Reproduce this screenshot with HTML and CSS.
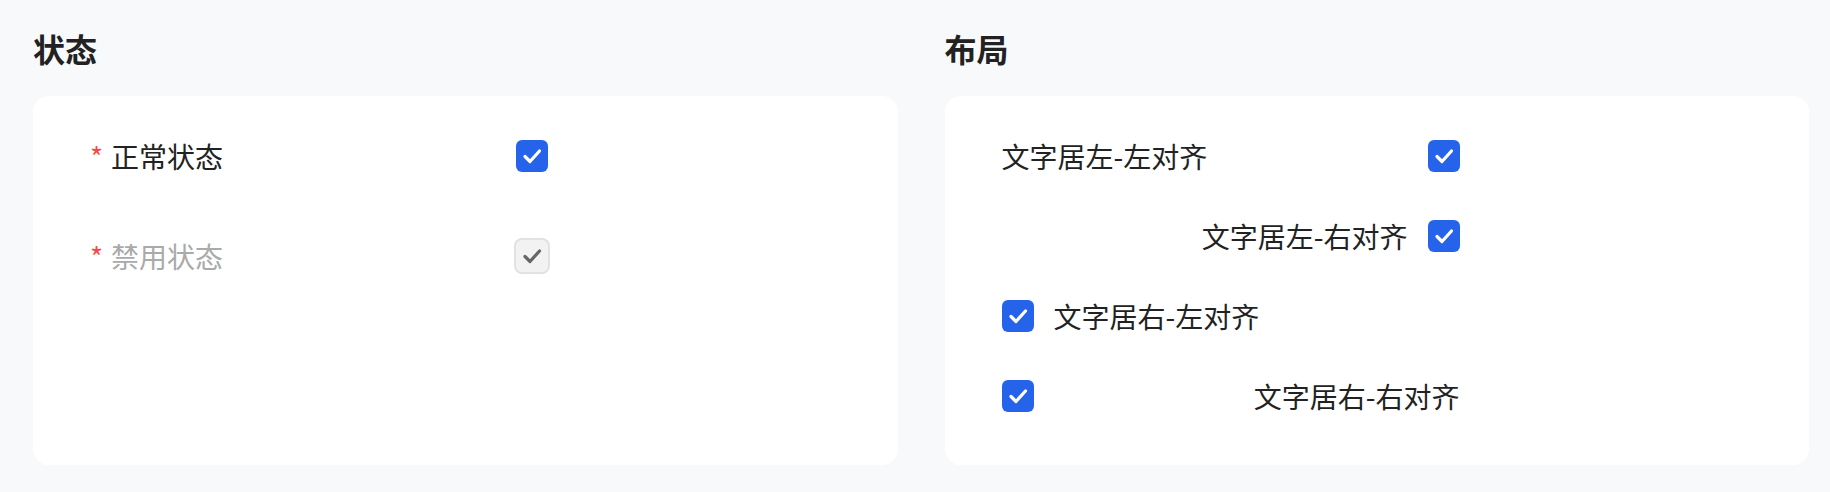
FILE: index.html
```html
<!DOCTYPE html>
<html lang="zh-CN">
<head>
  <meta charset="UTF-8">
  <meta name="viewport" content="width=device-width, initial-scale=1.0">
  <title>Checkbox 表单</title>
  <link rel="stylesheet" href="styles.css">
</head>
<body>
  <div class="page">
    <!-- 状态 -->
    <section class="panel">
      <h2 class="panel-title">状态</h2>
      <div class="card card-status">
        <div class="form-item">
          <label class="item-label"><span class="required">*</span>正常状态</label>
          <span class="checkbox checked">
            <svg viewBox="0 0 32 32"><path d="M9 16.5 L14 21.5 L23.5 11" /></svg>
          </span>
        </div>
        <div class="form-item">
          <label class="item-label disabled"><span class="required">*</span>禁用状态</label>
          <span class="checkbox disabled">
            <svg viewBox="0 0 32 32"><path d="M9 16.5 L14 21.5 L23.5 11" /></svg>
          </span>
        </div>
      </div>
    </section>

    <!-- 布局 -->
    <section class="panel">
      <h2 class="panel-title">布局</h2>
      <div class="card card-layout">
        <div class="form-item">
          <label class="item-label">文字居左-左对齐</label>
          <span class="checkbox checked">
            <svg viewBox="0 0 32 32"><path d="M9 16.5 L14 21.5 L23.5 11" /></svg>
          </span>
        </div>
        <div class="form-item">
          <label class="item-label align-right">文字居左-右对齐</label>
          <span class="checkbox checked">
            <svg viewBox="0 0 32 32"><path d="M9 16.5 L14 21.5 L23.5 11" /></svg>
          </span>
        </div>
        <div class="form-item">
          <span class="checkbox checked">
            <svg viewBox="0 0 32 32"><path d="M9 16.5 L14 21.5 L23.5 11" /></svg>
          </span>
          <label class="item-label">文字居右-左对齐</label>
        </div>
        <div class="form-item">
          <span class="checkbox checked">
            <svg viewBox="0 0 32 32"><path d="M9 16.5 L14 21.5 L23.5 11" /></svg>
          </span>
          <label class="item-label align-right">文字居右-右对齐</label>
        </div>
      </div>
    </section>
  </div>
</body>
</html>
```

FILE: styles.css
```css
body {
  margin: 0;
  background: #f8f9fb;
  color: #222;
  font-family: "Noto Sans CJK SC", "Noto Sans", sans-serif;
}
.page {
  display: grid;
  grid-template-columns: 1fr 1fr;
  column-gap: 47px;
  padding: 24px 21px 0 33px;
}
.panel {
  display: flex;
  flex-direction: column;
}
.panel-title {
  margin: 0 0 24px;
  font-size: 32px;
  line-height: 48px;
  font-weight: 700;
}
.card {
  flex: 1;
  background: #fff;
  border-radius: 16px;
  padding: 20px 57px 29px;
}
.form-item {
  display: flex;
  align-items: center;
  gap: 20px;
  height: 80px;
}
.card-status .form-item {
  padding-bottom: 20px;
}
.item-label {
  width: 406px;
  font-size: 28px;
  line-height: 40px;
}
.item-label.align-right {
  text-align: right;
}
.item-label.disabled {
  color: #aaa;
}
.required {
  color: #f54848;
  margin-right: 8px;
}
.checkbox {
  display: flex;
  width: 32px;
  height: 32px;
  border-radius: 6px;
  flex-shrink: 0;
}
.checkbox svg {
  width: 32px;
  height: 32px;
  fill: none;
  stroke-width: 3.2;
  stroke-linecap: round;
  stroke-linejoin: round;
}
.checkbox.checked {
  background: #2563eb;
}
.checkbox.checked svg {
  stroke: #fff;
}
.checkbox.disabled {
  background: #f2f2f2;
  box-shadow: 0 0 0 2px #e2e2e2;
}
.checkbox.disabled svg {
  stroke: #666;
}
```
